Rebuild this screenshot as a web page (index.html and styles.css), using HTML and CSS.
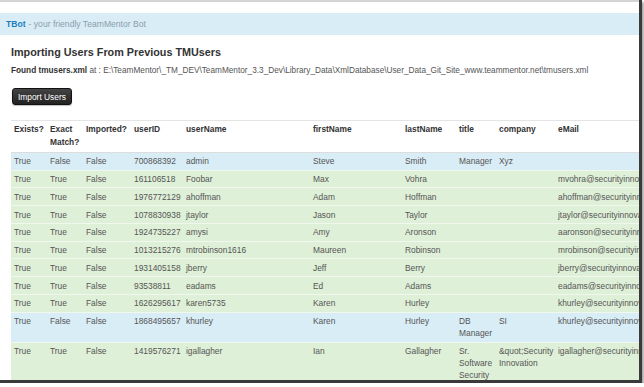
FILE: index.html
```html
<!DOCTYPE html>
<html lang="en">
<head>
    <meta charset="UTF-8">
    <title>TBot - Import Users</title>
    <link rel="stylesheet" href="styles.css">
</head>
<body>
    <div class="shot">
        <div class="topline"></div>

        <header class="navbar">
            <a href="#" class="brand">TBot</a>
            <span class="tagline">- your friendly TeamMentor Bot</span>
        </header>

        <main>
            <h3>Importing Users From Previous TMUsers</h3>
            <p class="found"><b>Found tmusers.xml</b> at : E:\TeamMentor\_TM_DEV\TeamMentor_3.3_Dev\Library_Data\XmlDatabase\User_Data_Git_Site_www.teammentor.net\tmusers.xml</p>

            <button class="btn-import">Import Users</button>

            <table class="users">
                <colgroup>
                    <col class="c-exists">
                    <col class="c-exact">
                    <col class="c-imported">
                    <col class="c-id">
                    <col class="c-user">
                    <col class="c-first">
                    <col class="c-last">
                    <col class="c-title">
                    <col class="c-company">
                    <col class="c-mail">
                </colgroup>
                <thead>
                    <tr>
                        <th>Exists?</th>
                        <th>Exact Match?</th>
                        <th>Imported?</th>
                        <th>userID</th>
                        <th>userName</th>
                        <th>firstName</th>
                        <th>lastName</th>
                        <th>title</th>
                        <th>company</th>
                        <th>eMail</th>
                    </tr>
                </thead>
                <tbody>
                    <tr class="info"><td>True</td><td>False</td><td>False</td><td>700868392</td><td>admin</td><td>Steve</td><td>Smith</td><td>Manager</td><td>Xyz</td><td></td></tr>
                    <tr class="success"><td>True</td><td>True</td><td>False</td><td>161106518</td><td>Foobar</td><td>Max</td><td>Vohra</td><td></td><td></td><td>mvohra@securityinnovation.com</td></tr>
                    <tr class="success"><td>True</td><td>True</td><td>False</td><td>1976772129</td><td>ahoffman</td><td>Adam</td><td>Hoffman</td><td></td><td></td><td>ahoffman@securityinnovation.com</td></tr>
                    <tr class="success"><td>True</td><td>True</td><td>False</td><td>1078830938</td><td>jtaylor</td><td>Jason</td><td>Taylor</td><td></td><td></td><td>jtaylor@securityinnovation.com</td></tr>
                    <tr class="success"><td>True</td><td>True</td><td>False</td><td>1924735227</td><td>amysi</td><td>Amy</td><td>Aronson</td><td></td><td></td><td>aaronson@securityinnovation.com</td></tr>
                    <tr class="success"><td>True</td><td>True</td><td>False</td><td>1013215276</td><td>mtrobinson1616</td><td>Maureen</td><td>Robinson</td><td></td><td></td><td>mrobinson@securityinnovation.com</td></tr>
                    <tr class="success"><td>True</td><td>True</td><td>False</td><td>1931405158</td><td>jberry</td><td>Jeff</td><td>Berry</td><td></td><td></td><td>jberry@securityinnovation.com</td></tr>
                    <tr class="success"><td>True</td><td>True</td><td>False</td><td>93538811</td><td>eadams</td><td>Ed</td><td>Adams</td><td></td><td></td><td>eadams@securityinnovation.com</td></tr>
                    <tr class="success"><td>True</td><td>True</td><td>False</td><td>1626295617</td><td>karen5735</td><td>Karen</td><td>Hurley</td><td></td><td></td><td>khurley@securityinnovation.com</td></tr>
                    <tr class="info"><td>True</td><td>False</td><td>False</td><td>1868495657</td><td>khurley</td><td>Karen</td><td>Hurley</td><td>DB Manager</td><td>SI</td><td>khurley@securityinnovation.com</td></tr>
                    <tr class="success"><td>True</td><td>True</td><td>False</td><td>1419576271</td><td>igallagher</td><td>Ian</td><td>Gallagher</td><td>Sr. Software Security Engineer</td><td>&amp;quot;Security Innovation</td><td>igallagher@securityinnovation.com</td></tr>
                </tbody>
            </table>
        </main>
    </div>
</body>
</html>
```

FILE: styles.css
```css
/* Base */
* { margin: 0; padding: 0; box-sizing: border-box; }

body {
    font-family: "Liberation Sans", Arial, sans-serif;
    font-size: 8.4px;
    line-height: 12px;
    color: #333;
    background: #fff;
}

/* Cadre de la capture */
.shot {
    width: 642px;
    height: 383px;
    overflow: hidden;
    background: #fff;
    border-right: 3px solid #3a3a3a;
    border-bottom: 3px solid #3a3a3a;
    box-shadow: 2px 2px 2px rgba(0, 0, 0, 0.35);
}

.topline {
    height: 2px;
    background: #d4d4d4;
}

/* Navbar */
.navbar {
    margin-top: 11px;
    height: 22px;
    padding: 0 6px;
    background: #d9edf7;
    display: flex;
    align-items: center;
    gap: 3px;
    font-size: 8.6px;
}

.brand {
    color: #1f7dbf;
    font-weight: bold;
    text-decoration: none;
}

.tagline {
    color: #8b9dab;
}

/* Contenu */
main {
    padding: 0 11px;
}

h3 {
    margin-top: 10px;
    font-size: 10.8px;
    line-height: 14px;
    color: #333;
}

.found {
    margin-top: 6px;
    font-size: 8.25px;
    color: #555;
}

.found b {
    color: #333;
}

.btn-import {
    margin-top: 11px;
    margin-left: 1px;
    height: 17px;
    padding: 0 5px;
    font-family: inherit;
    font-size: 8.4px;
    color: #fff;
    background: linear-gradient(#444, #222);
    border: 1px solid #111;
    border-radius: 3px;
    box-shadow: 0 1px 1px rgba(0, 0, 0, 0.25);
}

/* Tableau */
.users {
    margin-top: 15px;
    table-layout: fixed;
    width: 674px;
    border-collapse: collapse;
}

.c-exists { width: 36px; }
.c-exact { width: 36px; }
.c-imported { width: 48px; }
.c-id { width: 52px; }
.c-user { width: 127px; }
.c-first { width: 92px; }
.c-last { width: 54px; }
.c-title { width: 40px; }
.c-company { width: 59px; }
.c-mail { width: 130px; }

.users th,
.users td {
    padding: 2.4px 3px;
    text-align: left;
    vertical-align: top;
    border-top: 1px solid #eee;
}

.users th {
    font-weight: bold;
    color: #333;
    line-height: 13px;
}

.users td {
    color: #555;
}

.users thead th {
    border-top: 1px solid #e4e4e4;
}

.users tbody tr:first-child td {
    border-top: 1px solid #ddd;
}

.users tr.info td {
    background: #d9edf7;
}

.users tr.success td {
    background: #dff0d8;
}

.users tr.success td,
.users tr.info td {
    border-top-color: #f0f7ec;
}
```
